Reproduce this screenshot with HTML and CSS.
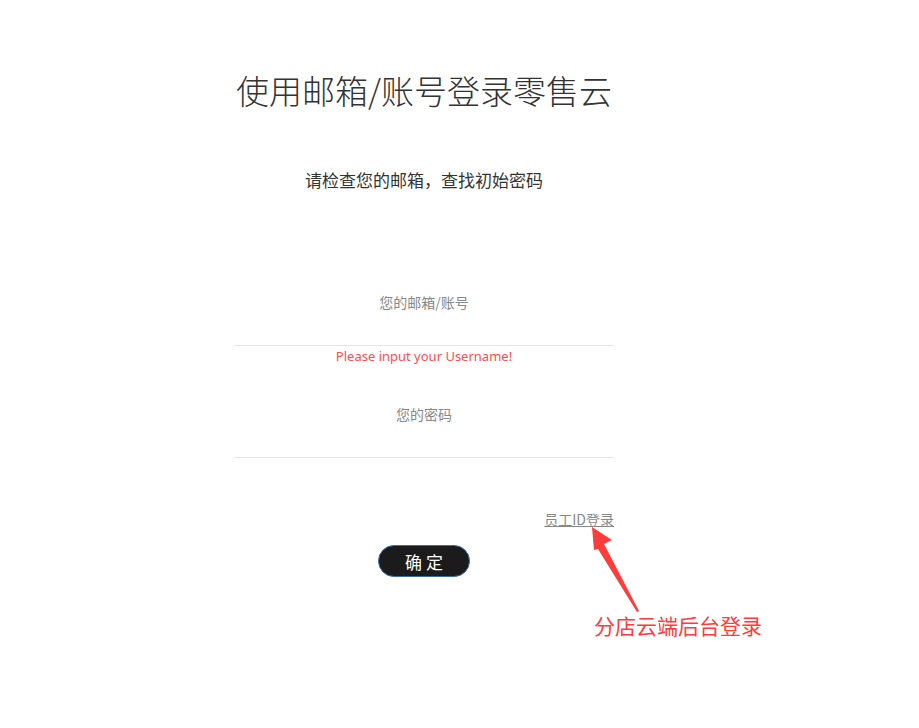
FILE: index.html
```html
<!DOCTYPE html>
<html lang="zh-CN">
<head>
    <meta charset="UTF-8">
    <title>使用邮箱/账号登录零售云</title>
    <link rel="stylesheet" href="styles.css">
</head>
<body>
<div class="login-page">
    <h1 class="login-title">使用邮箱/账号登录零售云</h1>
    <p class="login-tip">请检查您的邮箱，查找初始密码</p>

    <form class="login-form">
        <div class="form-field">
            <label class="field-label" for="username">您的邮箱/账号</label>
            <input class="field-input" id="username" type="text">
        </div>
        <div class="field-error">Please input your Username!</div>

        <div class="form-field field-password">
            <label class="field-label" for="password">您的密码</label>
            <input class="field-input" id="password" type="password">
        </div>

        <div class="form-links">
            <a class="staff-link" href="#">员工ID登录</a>
        </div>

        <div class="form-actions">
            <button class="submit-btn" type="button">确 定</button>
        </div>
    </form>
</div>

<!-- 标注 -->
<svg class="note-arrow" width="60" height="95" viewBox="0 0 60 95">
    <polygon points="2,2 22,15 14,19 49,86 47,87 8,24 4,25" fill="#ff3b3b"/>
</svg>
<div class="note-text">分店云端后台登录</div>
</body>
</html>
```

FILE: styles.css
```css
* {
    box-sizing: border-box;
}

body {
    margin: 0;
    background: #ffffff;
    font-family: "Noto Sans CJK SC", "Noto Sans", sans-serif;
    color: #333333;
}

.login-page {
    width: 380px;
    margin-left: 234px;
    padding-top: 65px;
    text-align: center;
}

.login-title {
    margin: 0 -30px;
    font-size: 33px;
    font-weight: 300;
    line-height: 50px;
    white-space: nowrap;
    color: #333333;
}

.login-tip {
    margin: 53px 0 0;
    font-size: 17px;
    line-height: 24px;
    color: #333333;
}

.login-form {
    margin-top: 100px;
}

.form-field {
    display: flex;
    flex-direction: column;
    border-bottom: 1px solid #e6e6e6;
}

.field-password {
    margin-top: 38px;
}

.field-label {
    font-size: 14px;
    line-height: 20px;
    color: #888888;
}

.field-input {
    height: 33px;
    border: none;
    outline: none;
    background: transparent;
    font-size: 14px;
    text-align: center;
}

.field-error {
    font-family: "Noto Sans", sans-serif;
    font-size: 13px;
    line-height: 20px;
    color: #ff4d4f;
}

.form-links {
    margin-top: 50px;
    text-align: right;
    line-height: 20px;
}

.staff-link {
    font-size: 14px;
    color: #888888;
    text-decoration: underline;
}

.form-actions {
    margin-top: 16px;
}

.submit-btn {
    width: 92px;
    height: 32px;
    border: 1px solid #3a6ea5;
    border-radius: 16px;
    background: #1b1b1b;
    color: #ffffff;
    font-family: "Noto Sans CJK SC", sans-serif;
    font-size: 17px;
    line-height: 1;
    cursor: pointer;
}

.note-arrow {
    position: absolute;
    left: 590px;
    top: 525px;
}

.note-text {
    position: absolute;
    left: 594px;
    top: 611px;
    font-size: 21px;
    line-height: 28px;
    color: #ff3b3b;
}
```
